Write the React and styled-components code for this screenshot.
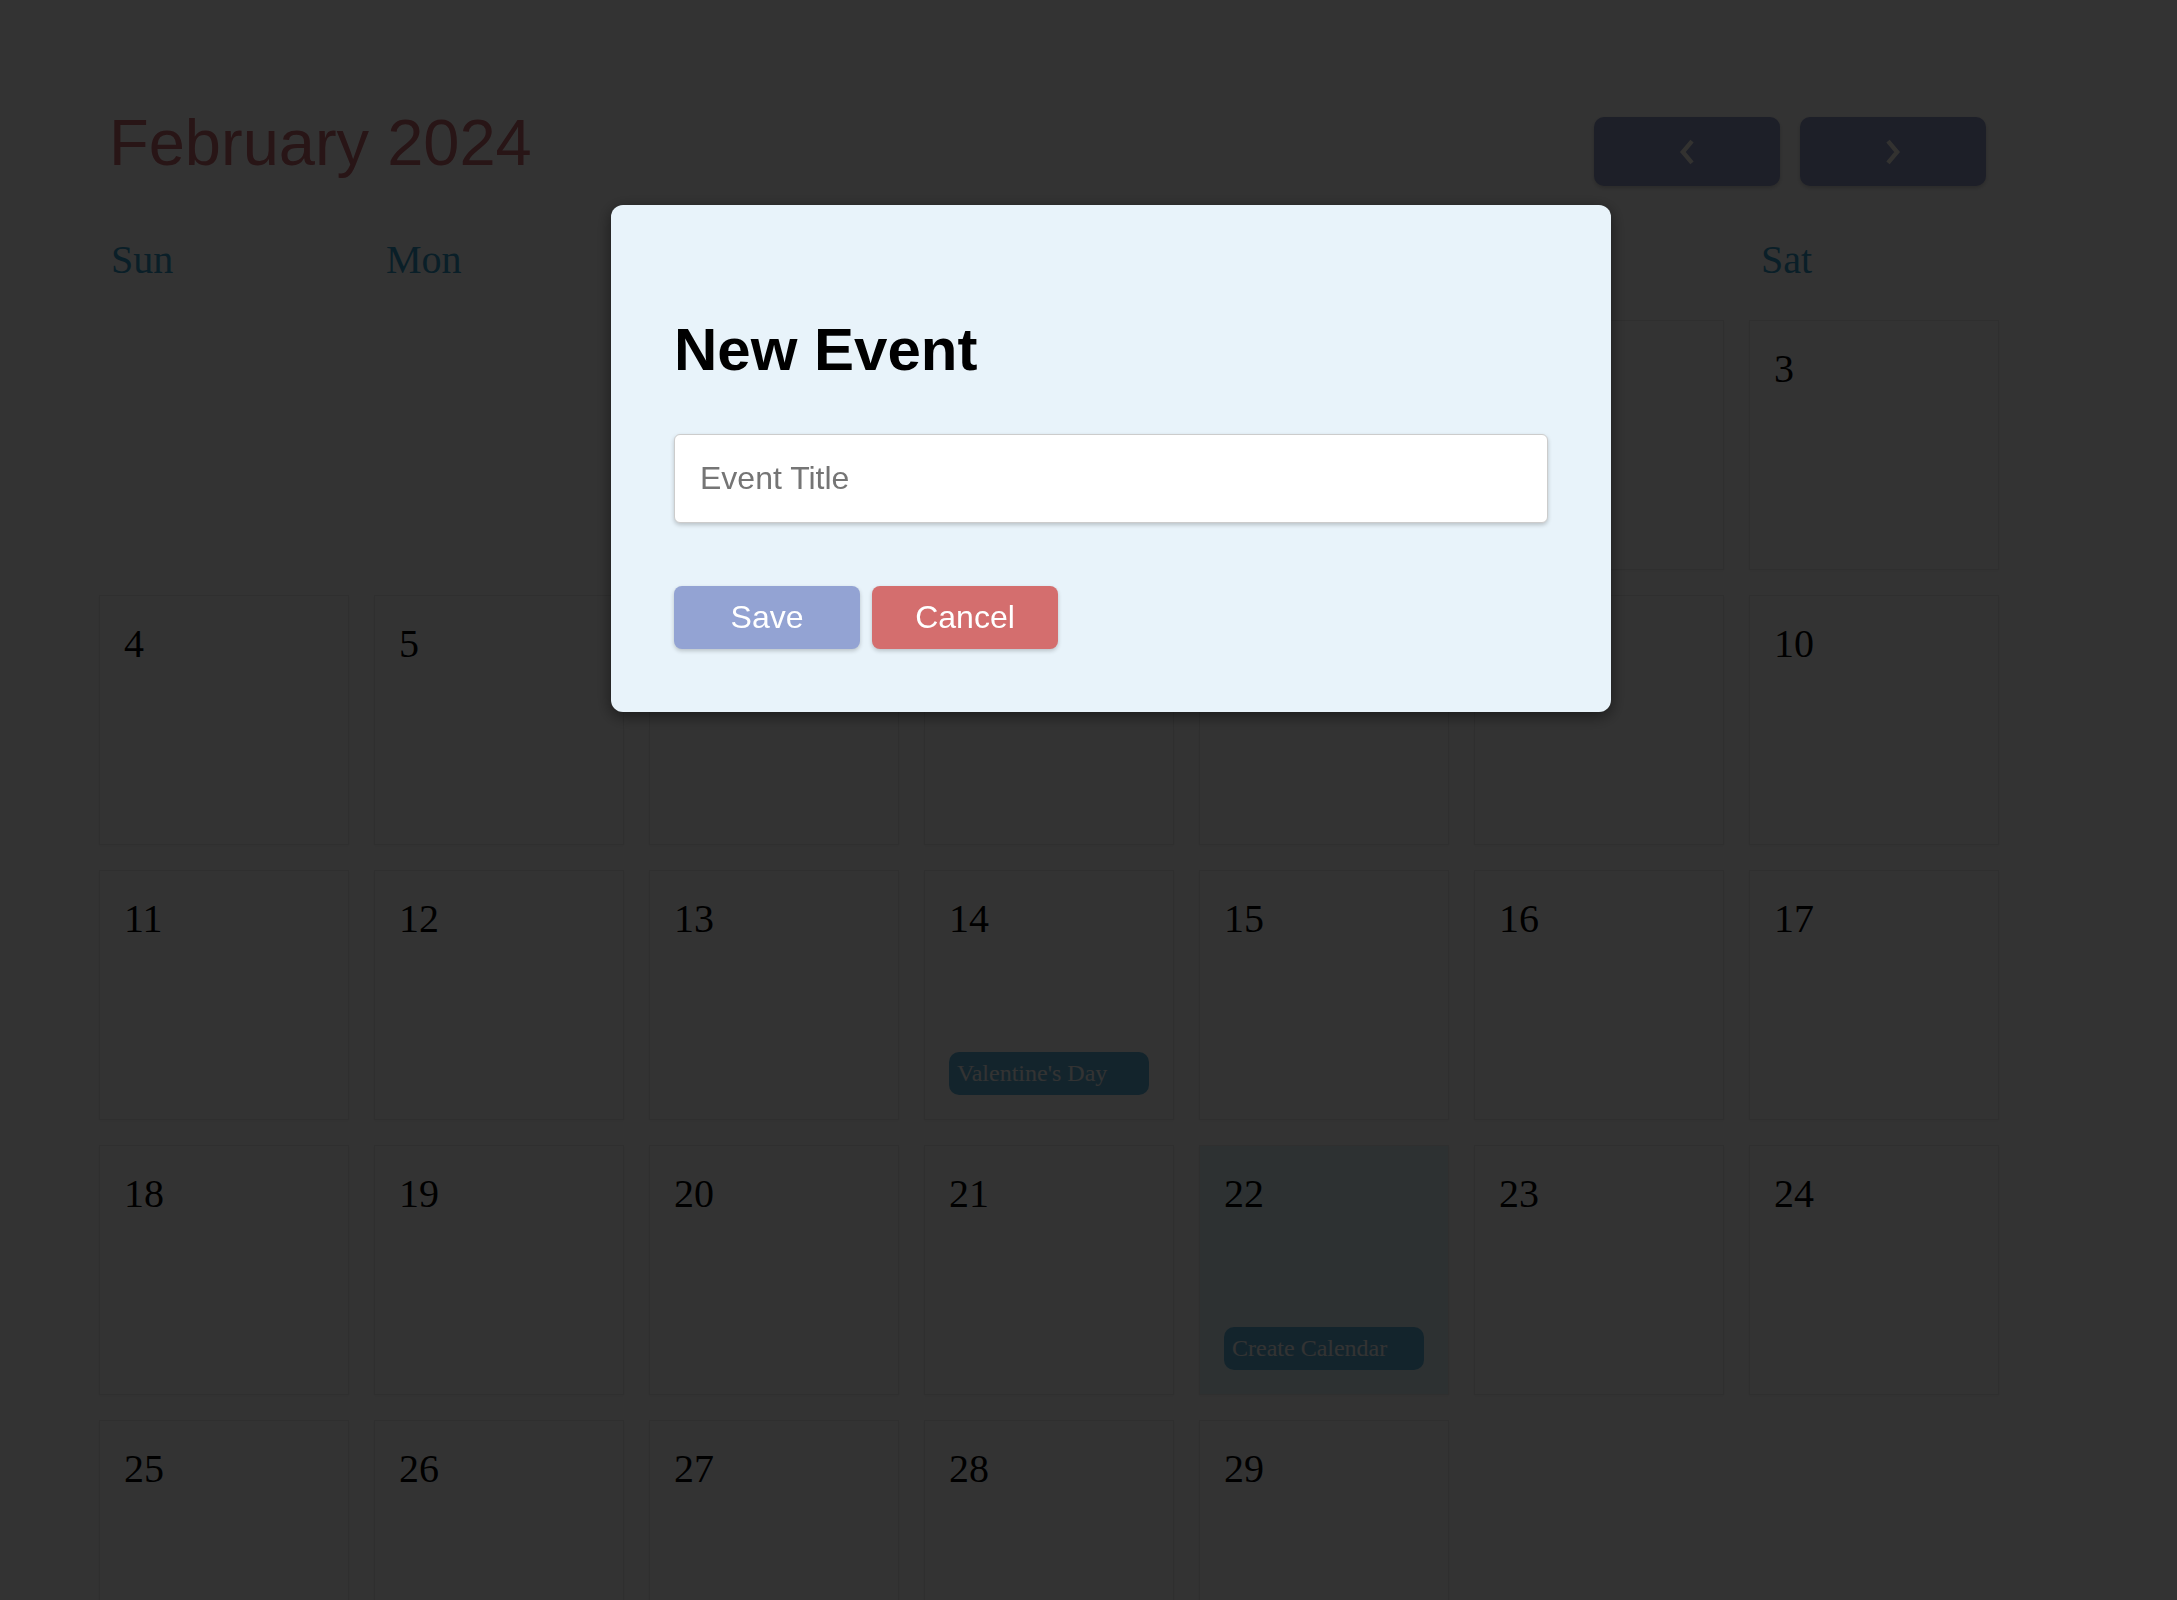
import React, { useState } from 'react';
import styled, { createGlobalStyle } from 'styled-components';

const GlobalStyle = createGlobalStyle`
  html, body {
    margin: 0;
    padding: 0;
    overflow: hidden;
  }
  body {
    background: #ffffff;
    font-family: "Liberation Serif", "Times New Roman", serif;
  }
`;

const Page = styled.div`
  min-height: 100vh;
  box-sizing: border-box;
  padding: 105px 178px 0 99px;
`;

const Header = styled.header`
  display: flex;
  justify-content: space-between;
  align-items: flex-start;
  padding: 0 13px 0 10px;
`;

const Title = styled.h1`
  margin: 0;
  font-family: "Liberation Sans", Arial, sans-serif;
  font-weight: normal;
  font-size: 65px;
  color: #c8686f;
`;

const Nav = styled.div`
  display: flex;
  gap: 20px;
  margin-top: 12px;
`;

const NavButton = styled.button`
  width: 186px;
  height: 69px;
  border: none;
  border-radius: 10px;
  background: #8f99c8;
  color: #fdfaf0;
  display: flex;
  align-items: center;
  justify-content: center;
  box-shadow: 0 2px 4px rgba(0, 0, 0, 0.2);
  cursor: pointer;
`;

const WeekRow = styled.div`
  display: grid;
  grid-template-columns: repeat(7, 250px);
  column-gap: 25px;
  margin-top: 50px;
`;

const WeekDay = styled.div`
  padding: 0 12px;
  font-size: 40px;
  color: #3399c6;
`;

const Grid = styled.div`
  display: grid;
  grid-template-columns: repeat(7, 250px);
  grid-auto-rows: 250px;
  gap: 25px;
  margin-top: 37px;
`;

const Cell = styled.div`
  box-sizing: border-box;
  display: flex;
  flex-direction: column;
  padding: 24px;
  border: 1px solid #e9e9e9;
  background: ${(p) => (p.$today ? '#e1f5fa' : '#ffffff')};
  box-shadow: 0 1px 3px rgba(0, 0, 0, 0.05);
`;

const EmptySlot = styled.div``;

const DayNum = styled.div`
  font-size: 40px;
  color: #000000;
`;

const Chip = styled.div`
  margin-top: auto;
  padding: 8px;
  border-radius: 10px;
  background: #60b4dc;
  color: #ffffff;
  font-size: 24px;
  white-space: nowrap;
`;

const Overlay = styled.div`
  position: fixed;
  inset: 0;
  background: rgba(0, 0, 0, 0.8);
`;

const Modal = styled.div`
  position: absolute;
  top: 205px;
  left: 611px;
  width: 1000px;
  box-sizing: border-box;
  padding: 64px 63px 63px;
  background: #e8f3fa;
  border-radius: 12px;
  box-shadow: 0 4px 16px rgba(0, 0, 0, 0.5);
  font-family: "Liberation Sans", Arial, sans-serif;
`;

const ModalTitle = styled.h2`
  margin: 46px 0 50px;
  font-size: 60px;
  font-weight: bold;
  color: #000000;
`;

const TitleInput = styled.input`
  display: block;
  width: 100%;
  box-sizing: border-box;
  padding: 25px;
  border: 1px solid #cccccc;
  border-radius: 6px;
  background: #ffffff;
  font-family: "Liberation Sans", Arial, sans-serif;
  font-size: 32px;
  box-shadow: 0 2px 4px rgba(0, 0, 0, 0.2);
  outline: none;

  &::placeholder {
    color: #757575;
  }
`;

const Actions = styled.div`
  display: flex;
  gap: 12px;
  margin-top: 63px;
`;

const ActionButton = styled.button`
  width: 186px;
  height: 63px;
  border: none;
  border-radius: 8px;
  background: ${(p) => (p.$variant === 'cancel' ? '#d46e6e' : '#93a3d3')};
  color: #ffffff;
  font-family: "Liberation Sans", Arial, sans-serif;
  font-size: 32px;
  box-shadow: 0 2px 4px rgba(0, 0, 0, 0.2);
  cursor: pointer;
`;

const Chevron = ({ dir }) => (
  <svg width="40" height="40" viewBox="0 0 24 24" fill="none" stroke="currentColor" strokeWidth="2.6" strokeLinejoin="miter" strokeLinecap="butt">
    <polyline points={dir === 'left' ? '15 5.5 9.5 12 15 18.5' : '9 5.5 14.5 12 9 18.5'} />
  </svg>
);

const weekDays = ['Sun', 'Mon', 'Tue', 'Wed', 'Thu', 'Fri', 'Sat'];

const events = {
  14: "Valentine's Day",
  22: 'Create Calendar',
};

// February 2024 starts on a Thursday
const firstWeekday = 4;
const daysInMonth = 29;
const today = 22;

function App() {
  const [title, setTitle] = useState('');
  const [showModal, setShowModal] = useState(true);

  const slots = [];
  for (let i = 0; i < firstWeekday; i++) slots.push(null);
  for (let d = 1; d <= daysInMonth; d++) slots.push(d);

  return (
    <>
      <GlobalStyle />
      <Page>
        <Header>
          <Title>February 2024</Title>
          <Nav>
            <NavButton aria-label="Previous month">
              <Chevron dir="left" />
            </NavButton>
            <NavButton aria-label="Next month">
              <Chevron dir="right" />
            </NavButton>
          </Nav>
        </Header>
        <WeekRow>
          {weekDays.map((d) => (
            <WeekDay key={d}>{d}</WeekDay>
          ))}
        </WeekRow>
        <Grid>
          {slots.map((d, i) =>
            d === null ? (
              <EmptySlot key={'e' + i} />
            ) : (
              <Cell key={d} $today={d === today}>
                <DayNum>{d}</DayNum>
                {events[d] && <Chip>{events[d]}</Chip>}
              </Cell>
            )
          )}
        </Grid>
      </Page>
      {showModal && (
        <Overlay>
          <Modal>
            <ModalTitle>New Event</ModalTitle>
            <TitleInput
              placeholder="Event Title"
              value={title}
              onChange={(e) => setTitle(e.target.value)}
            />
            <Actions>
              <ActionButton>Save</ActionButton>
              <ActionButton $variant="cancel" onClick={() => setShowModal(false)}>
                Cancel
              </ActionButton>
            </Actions>
          </Modal>
        </Overlay>
      )}
    </>
  );
}

export default App;
